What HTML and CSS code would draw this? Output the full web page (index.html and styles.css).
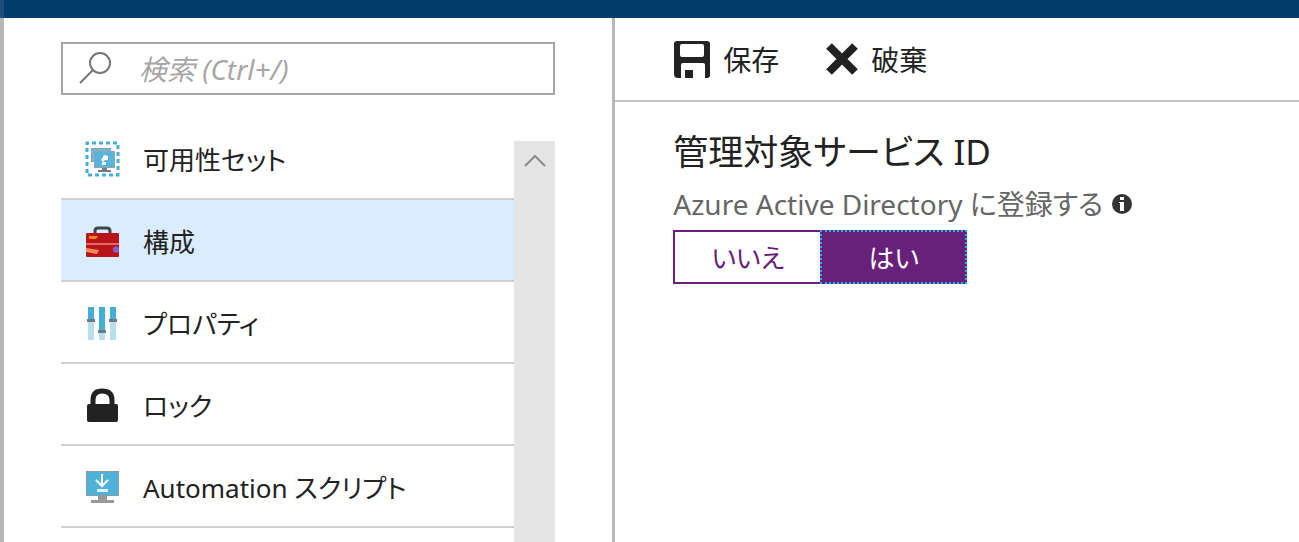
FILE: index.html
```
<!DOCTYPE html>
<html lang="ja">

<head>
  <meta charset="utf-8">
  <title>構成</title>
  <link rel="stylesheet" href="styles.css">
</head>

<body>
  <header class="topbar"></header>
  <div class="blades">
    <aside class="sidebar">
      <div class="search">
        <svg class="search-icon" width="34" height="34" viewBox="0 0 34 34" fill="none" stroke="#777" stroke-width="2">
          <circle cx="21" cy="11" r="10" />
          <path d="M14 18L1 31" />
        </svg>
        <input class="search-input" type="text" aria-label="検索" placeholder="検索 (Ctrl+/)">
      </div>

      <div class="menu-wrap">
        <nav class="menu">
          <a class="menu-item" href="#">
            <svg width="36" height="36" viewBox="0 0 36 36">
              <path d="M2 2H33V34H2Z" fill="none" stroke="#45aed6" stroke-width="3" stroke-dasharray="4 3" stroke-dashoffset="2" />
              <path d="M6 7H26V9H9V21H6Z" fill="#8a9ba5" />
              <path d="M7 8H26V20H7Z" fill="#6dbbdc" />
              <path d="M9 10H30V27H9Z" fill="#8fa4ae" />
              <path d="M10 11H29V26H10Z" fill="#59b4d9" />
              <path d="M19 14l4 1 0 4-3 0-2 2-2-2zM17 21h4v3h-4z" fill="#fff" />
              <path d="M17 27h5v2h4v2H13v-2h4z" fill="#7a7a7a" />
            </svg>
            <span>可用性セット</span>
          </a>
          <a class="menu-item active" href="#">
            <svg width="36" height="36" viewBox="0 0 36 36">
              <path d="M10 11V8Q10 5 13 5H22Q25 5 25 8V11" fill="none" stroke="#3c454b" stroke-width="3" />
              <rect x="1" y="10" width="33" height="24" rx="1" fill="#b8141a" />
              <path d="M1 20H34V22H1Z" fill="#e5676a" />
              <path d="M4 13H13L11 16H4Z" fill="#f58220" />
              <path d="M1 25L14 27L12 31L1 29Z" fill="#f08c5a" />
              <path d="M28 25L31 23L34 25V29L31 30L28 28Z" fill="#8661c5" />
            </svg>
            <span>構成</span>
          </a>
          <a class="menu-item" href="#">
            <svg width="36" height="36" viewBox="0 0 36 36">
              <path d="M3 2H9V35H3ZM14 2H20V35H14ZM25 2H31V35H25Z" fill="#b8dfee" />
              <path d="M3 2H9V15H3ZM14 2H20V26H14ZM25 2H31V15H25Z" fill="#45aed6" />
              <path d="M2 14H10V17H2ZM13 25H21V28H13ZM24 14H32V17H24Z" fill="#707b80" />
            </svg>
            <span>プロパティ</span>
          </a>
          <a class="menu-item" href="#">
            <svg width="36" height="36" viewBox="0 0 36 36">
              <path d="M8 19V13Q8 4 17 4Q27 4 27 13V19" fill="none" stroke="#222" stroke-width="5" />
              <rect x="2" y="17" width="31" height="18" rx="2" fill="#222" />
            </svg>
            <span>ロック</span>
          </a>
          <a class="menu-item" href="#">
            <svg width="36" height="36" viewBox="0 0 36 36">
              <path d="M1 2H34V27H1Z" fill="#8f9ba1" />
              <path d="M2 3H33V26H2Z" fill="#4fb2d9" />
              <path d="M17 5V17M11 11L17 17L23 11" fill="none" stroke="#fff" stroke-width="2" />
              <path d="M12 20H23V23H12Z" fill="#e3f3fa" />
              <path d="M13 27H22V31H29V34H6V31H13Z" fill="#999" />
            </svg>
            <span>Automation スクリプト</span>
          </a>
        </nav>
        <div class="scrollbar">
          <button class="scroll-up" aria-label="上へスクロール">
            <svg width="22" height="14" viewBox="0 0 22 14" fill="none" stroke="#8c8c8c" stroke-width="2">
              <path d="M1 12L11 2L21 12" />
            </svg>
          </button>
        </div>
      </div>
    </aside>

    <main class="content">
      <div class="toolbar">
        <button class="command">
          <svg width="38" height="38" viewBox="0 0 38 38">
            <path fill="#222" fill-rule="evenodd" d="M4 1H34Q37 1 37 4V35Q37 38 34 38H32V25Q32 23 30 23H10Q8 23 8 25V38H5Q1 38 1 34V4Q1 1 4 1ZM7 6V15Q7 17 9 17H29Q31 17 31 15V6Q31 4 29 4H9Q7 4 7 6Z" />
            <path fill="#fff" d="M8 26Q8 24 10 24H30Q32 24 32 26V38H8Z" />
            <rect x="12" y="30" width="8" height="8" fill="#222" />
          </svg>
          <span>保存</span>
        </button>
        <button class="command">
          <svg width="34" height="34" viewBox="0 0 34 34">
            <path d="M4 4L30 30M30 4L4 30" stroke="#222" stroke-width="8" />
          </svg>
          <span>破棄</span>
        </button>
      </div>

      <section class="settings">
        <h1 class="title">管理対象サービス ID</h1>
        <div class="field-label">
          <span id="register-label">Azure Active Directory に登録する</span>
          <svg width="22" height="22" viewBox="0 0 22 22">
            <circle cx="11" cy="11" r="10" fill="#333" />
            <path d="M9 4H13V7H9ZM8 9H13V18H9V10H8Z" fill="#fff" />
          </svg>
        </div>
        <div class="toggle" role="group" aria-labelledby="register-label">
          <button class="option" aria-pressed="false">いいえ</button>
          <button class="option selected" aria-pressed="true">はい</button>
        </div>
      </section>
    </main>
  </div>
</body>

</html>
```
FILE: styles.css
```
* {
  box-sizing: border-box;
}

body {
  margin: 0;
  height: 100vh;
  overflow: hidden;
  display: flex;
  flex-direction: column;
  background: #fff;
  color: #222;
  font-family: "Noto Sans", "Noto Sans CJK JP", sans-serif;
  font-size: 26px;
  font-feature-settings: "palt";
}

button,
input {
  font: inherit;
  font-feature-settings: inherit;
  color: inherit;
}

button {
  padding: 0;
  border: none;
  background: none;
  cursor: pointer;
}

svg {
  flex: none;
}

.topbar {
  flex: none;
  height: 18px;
  background: #003c6c;
  border-left: 4px solid #1d4f7d;
}

.blades {
  flex: 1;
  min-height: 0;
  display: grid;
  grid-template-columns: 9fr 10fr;
}

.sidebar {
  display: flex;
  flex-direction: column;
  min-width: 0;
  min-height: 0;
  padding: 24px 57px 0;
  border-left: 4px solid #b8b8b8;
  border-right: 3px solid #b8b8b8;
}

.search {
  flex: none;
  display: flex;
  align-items: center;
  gap: 26px;
  height: 53px;
  padding: 0 16px;
  border: 2px solid #a6a6a6;
}

.search-input {
  flex: 1;
  min-width: 0;
  height: 44px;
  padding: 0;
  border: none;
  outline: none;
  font-size: 28px;
}

.search-input::placeholder {
  color: #a6a6a6;
  font-style: italic;
  opacity: 1;
}

.menu-wrap {
  flex: 1;
  min-height: 0;
  display: flex;
  margin-top: 23px;
}

.menu {
  flex: 1;
  overflow: hidden;
}

.menu-item {
  display: flex;
  align-items: center;
  gap: 22px;
  height: 82px;
  padding: 2px 24px 0;
  border-bottom: 2px solid #cfcfcf;
  color: #222;
  text-decoration: none;
}

.menu-item.active {
  background: #d9edff;
}

.scrollbar {
  width: 41px;
  margin-top: 23px;
  background: #e4e4e4;
}

.scroll-up {
  display: flex;
  align-items: center;
  justify-content: center;
  width: 100%;
  height: 40px;
}

.toolbar {
  display: flex;
  align-items: center;
  gap: 46px;
  height: 84px;
  padding-left: 58px;
  border-bottom: 2px solid #c4c4c4;
}

.command {
  display: flex;
  align-items: center;
  gap: 12px;
  font-size: 28px;
}

.settings {
  padding: 28px 58px;
}

.title {
  margin: 0;
  font-size: 35px;
  font-weight: 400;
  line-height: 44px;
}

.field-label {
  display: flex;
  align-items: center;
  gap: 8px;
  margin-top: 12px;
  font-size: 28px;
  line-height: 36px;
  color: #666;
}

.toggle {
  display: flex;
  margin-top: 8px;
}

.option {
  width: 147px;
  height: 54px;
  border: 2px solid #68217a;
  border-right: none;
  background: #fff;
  color: #68217a;
}

.option.selected {
  border: 2px dotted #1fb4ee;
  background: #68217a;
  color: #fff;
}
```
